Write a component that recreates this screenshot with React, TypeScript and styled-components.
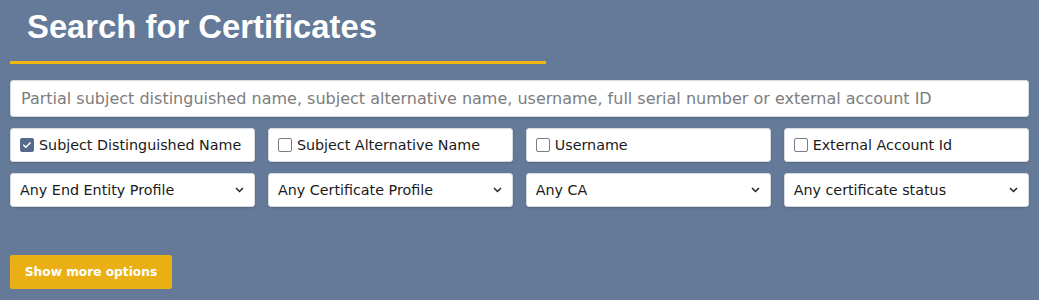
import React, { useState } from "react";
import styled, { createGlobalStyle } from "styled-components";

const GlobalStyle = createGlobalStyle`
  html, body { margin: 0; padding: 0; background: #647a98; }
  body { font-family: "DejaVu Sans", sans-serif; }
  * { box-sizing: border-box; }
`;

const Page = styled.div`
  background: #647a98;
  min-height: 300px;
  padding: 0 10px;
`;

const TitleBar = styled.div`
  width: 536px;
  border-bottom: 3px solid #f4b70f;
  padding: 9px 0 0 17px;
  height: 64px;
`;

const Title = styled.h1`
  margin: 0;
  font-family: "Liberation Sans", Arial, sans-serif;
  font-weight: bold;
  font-size: 32.8px;
  line-height: 36px;
  color: #ffffff;
`;

const Form = styled.div`
  margin-top: 16px;
  display: flex;
  flex-direction: column;
  gap: 11px;
`;

const SearchInput = styled.input`
  width: 100%;
  height: 37px;
  border: 1px solid #d6dbe2;
  border-radius: 3px;
  background: #fff;
  padding: 0 10px;
  font-family: "DejaVu Sans", sans-serif;
  font-size: 16px;
  color: #222;
  box-shadow: 0 1px 2px rgba(0, 0, 0, 0.15);
  outline: none;
  &::placeholder { color: #7d7d7d; }
`;

const Grid = styled.div`
  display: grid;
  grid-template-columns: repeat(4, 1fr);
  column-gap: 12.5px;
`;

const Field = styled.label`
  display: flex;
  align-items: center;
  gap: 5px;
  height: 34px;
  background: #fff;
  border: 1px solid #d6dbe2;
  border-radius: 3px;
  padding: 0 9px;
  box-shadow: 0 1px 2px rgba(0, 0, 0, 0.15);
  font-size: 14.3px;
  color: #1a1a1a;
  cursor: pointer;
`;

const Check = styled.input`
  appearance: none;
  margin: 0;
  width: 14px;
  height: 14px;
  border: 1.5px solid #7c7c86;
  border-radius: 2px;
  background: #fff;
  flex: none;
  &:checked {
    background: #55698a;
    border-color: #55698a;
    background-image: url("data:image/svg+xml,%3Csvg xmlns='http://www.w3.org/2000/svg' viewBox='0 0 14 14'%3E%3Cpath d='M3.2 7.2l2.4 2.4 5-5' fill='none' stroke='white' stroke-width='1.8' stroke-linecap='round' stroke-linejoin='round'/%3E%3C/svg%3E");
    background-size: 100% 100%;
  }
`;

const SelectWrap = styled.div`
  position: relative;
  height: 34px;
`;

const Select = styled.select`
  appearance: none;
  width: 100%;
  height: 34px;
  background: #fff;
  border: 1px solid #d6dbe2;
  border-radius: 3px;
  padding: 0 28px 0 9px;
  box-shadow: 0 1px 2px rgba(0, 0, 0, 0.15);
  font-family: "DejaVu Sans", sans-serif;
  font-size: 14.3px;
  color: #1a1a1a;
  outline: none;
`;

const Chevron = styled.svg`
  position: absolute;
  right: 11px;
  top: 50%;
  transform: translateY(-50%);
  width: 9px;
  height: 6px;
  pointer-events: none;
`;

const ButtonRow = styled.div`
  margin-top: 48px;
`;

const MoreButton = styled.button`
  height: 34px;
  width: 162px;
  border: none;
  border-radius: 2px;
  background: #eab013;
  color: #fff;
  font-family: "DejaVu Sans", sans-serif;
  font-weight: bold;
  font-size: 12.2px;
  padding: 0;
  cursor: pointer;
`;

const checks = [
  { label: "Subject Distinguished Name", checked: true },
  { label: "Subject Alternative Name", checked: false },
  { label: "Username", checked: false },
  { label: "External Account Id", checked: false },
];

const selects = [
  "Any End Entity Profile",
  "Any Certificate Profile",
  "Any CA",
  "Any certificate status",
];

export default function App() {
  const [state, setState] = useState(checks.map((c) => c.checked));
  return (
    <>
      <GlobalStyle />
      <Page>
        <TitleBar>
          <Title>Search for Certificates</Title>
        </TitleBar>
        <Form>
          <SearchInput placeholder="Partial subject distinguished name, subject alternative name, username, full serial number or external account ID" />
          <Grid>
            {checks.map((c, i) => (
              <Field key={c.label}>
                <Check
                  type="checkbox"
                  checked={state[i]}
                  onChange={() => setState(state.map((v, j) => (j === i ? !v : v)))}
                />
                {c.label}
              </Field>
            ))}
          </Grid>
          <Grid>
            {selects.map((s) => (
              <SelectWrap key={s}>
                <Select defaultValue={s}>
                  <option>{s}</option>
                </Select>
                <Chevron viewBox="0 0 9 6">
                  <path d="M1 1l3.5 3.5L8 1" fill="none" stroke="#222" strokeWidth="1.5" />
                </Chevron>
              </SelectWrap>
            ))}
          </Grid>
        </Form>
        <ButtonRow>
          <MoreButton>Show more options</MoreButton>
        </ButtonRow>
      </Page>
    </>
  );
}
